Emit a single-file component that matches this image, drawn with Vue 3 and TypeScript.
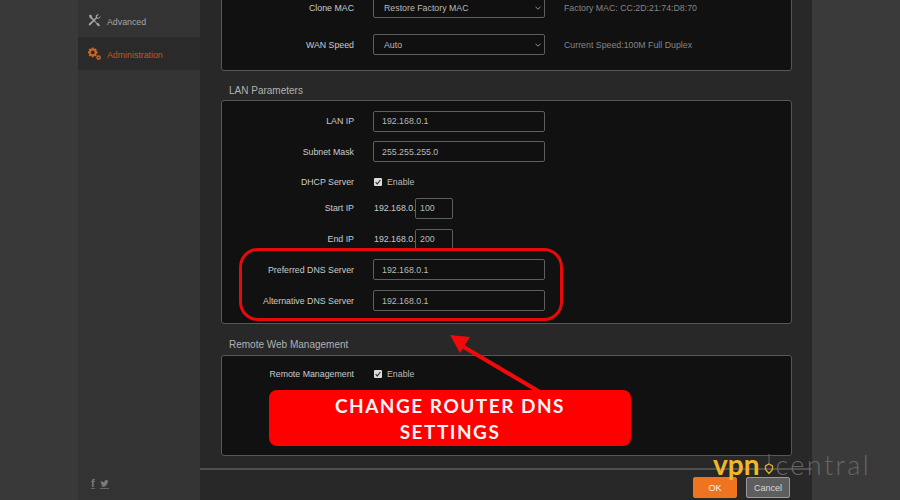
<script setup lang="ts">
const dnsRows = [
  { label: 'Preferred DNS Server', value: '192.168.0.1' },
  { label: 'Alternative DNS Server', value: '192.168.0.1' }
]
</script>

<template>
  <div class="page">
    <aside class="sidebar">
      <nav class="nav">
        <a class="nav-item">
          <svg class="nav-icon" viewBox="0 0 14 14" fill="currentColor">
            <path d="M1 1.5 3 .5l1.2 1.6v1L9.800 9.600l1.200.2 2 2.400-1.300 1.300-2.400-2-.3-1.200L3.300 4.800h-1z" />
            <path d="M13.400 2.200 11.300 4.200l-1.300-.4-.4-1.300L11.700.5C10 0 8.300 1 8.300 2.900c0 .4.100.7.200 1L1 10.600c-.8.800.6 2.300 1.400 1.500l6.900-7.300c1.900.9 4.500-.5 4.100-2.600z" />
          </svg>
          <span>Advanced</span>
        </a>
        <a class="nav-item active">
          <svg class="nav-icon" viewBox="0 0 14 14" fill="currentColor">
            <path fill-rule="evenodd" d="M4.200.5h1.800l.2 1.200 1 .4 1-.7 1.300 1.300-.7 1 .4 1 1.200.2v1.800l-1.200.2-.4 1 .7 1-1.300 1.300-1-.7-1 .4-.2 1.200H4.200L4 9.900l-1-.4-1 .7L.7 8.900l.7-1-.4-1L-.2 6.700V4.900L1 4.700l.4-1-.7-1L2 1.400l1 .7 1-.4zM5.100 3.700a2.100 2.100 0 1 0 0 4.200 2.100 2.100 0 0 0 0-4.200z" />
            <circle cx="11.400" cy="11.400" r="2.500" />
            <circle cx="11.400" cy="11.400" r=".9" fill="#2a2a2a" />
          </svg>
          <span>Administration</span>
        </a>
      </nav>
      <div class="social">
        <span class="fb">f</span>
        <svg class="tw" viewBox="0 0 24 24" fill="currentColor">
          <path d="M23 5c-.8.400-1.700.6-2.600.7.900-.6 1.600-1.400 2-2.500-.9.500-1.800.9-2.900 1.100a4.500 4.500 0 0 0-7.700 4.100C8 8.200 4.700 6.400 2.500 3.700c-1.200 2-.6 4.600 1.400 6-.7 0-1.400-.2-2-.6 0 2.200 1.500 4.100 3.600 4.500-.7.200-1.400.2-2 .1.600 1.800 2.200 3.100 4.200 3.100A9.100 9.100 0 0 1 1 18.700 12.800 12.800 0 0 0 20.700 7.300c.9-.6 1.700-1.400 2.300-2.300z" />
        </svg>
      </div>
    </aside>

    <main class="main">
      <div class="scroll">
        <section class="panel wan-panel">
          <div class="row">
            <label class="label">Clone MAC</label>
            <div class="field select">
              <span>Restore Factory MAC</span>
              <svg viewBox="0 0 6 4" class="chev"><path d="M.5.8 3 3.200 5.500.8" /></svg>
            </div>
            <span class="note">Factory MAC: CC:2D:21:74:D8:70</span>
          </div>
          <div class="row">
            <label class="label">WAN Speed</label>
            <div class="field select">
              <span>Auto</span>
              <svg viewBox="0 0 6 4" class="chev"><path d="M.5.8 3 3.200 5.500.8" /></svg>
            </div>
            <span class="note">Current Speed:100M Full Duplex</span>
          </div>
        </section>

        <h3 class="section-title lan-title">LAN Parameters</h3>
        <section class="panel lan-panel">
          <div class="row">
            <label class="label">LAN IP</label>
            <div class="field">192.168.0.1</div>
          </div>
          <div class="row">
            <label class="label">Subnet Mask</label>
            <div class="field">255.255.255.0</div>
          </div>
          <div class="row check-row">
            <label class="label">DHCP Server</label>
            <span class="check">
              <svg viewBox="0 0 8 8"><path d="M1.600 4.200 3.300 6l3-4" /></svg>
            </span>
            <span class="enable">Enable</span>
          </div>
          <div class="row">
            <label class="label">Start IP</label>
            <span class="prefix">192.168.0.</span>
            <div class="field short">100</div>
          </div>
          <div class="row">
            <label class="label">End IP</label>
            <span class="prefix">192.168.0.</span>
            <div class="field short">200</div>
          </div>
          <div v-for="dns in dnsRows" :key="dns.label" class="row">
            <label class="label">{{ dns.label }}</label>
            <div class="field">{{ dns.value }}</div>
          </div>
        </section>

        <h3 class="section-title remote-title">Remote Web Management</h3>
        <section class="panel remote-panel">
          <div class="row check-row">
            <label class="label">Remote Management</label>
            <span class="check">
              <svg viewBox="0 0 8 8"><path d="M1.600 4.200 3.300 6l3-4" /></svg>
            </span>
            <span class="enable">Enable</span>
          </div>
        </section>
      </div>

      <footer class="footer">
        <button class="btn ok">OK</button>
        <button class="btn cancel">Cancel</button>
      </footer>
    </main>

    <div class="gutter"></div>

    <!-- annotations drawn over the screenshot -->
    <div class="highlight"></div>
    <svg class="arrow" viewBox="0 0 110 65" fill="#f00a0a">
      <path d="M7 8 95 60" stroke="#f00a0a" stroke-width="4" />
      <path d="M0 0 20 2 10 18z" />
    </svg>
    <div class="banner">CHANGE ROUTER DNS<br />SETTINGS</div>

    <div class="watermark">
      <span class="wm-vpn">vpn</span>
      <svg class="wm-pin" viewBox="0 0 10 24" fill="none">
        <path d="M5 0v10" stroke="#666" stroke-width="1" />
        <path d="M5 10 8.500 12v3.500L5 19.500 1.500 15.500V12z" stroke="#e2ad2c" stroke-width="1.300" />
      </svg>
      <span class="wm-central">central</span>
    </div>
  </div>
</template>

<style>
html,
body {
  margin: 0;
  background: #3a3a3a;
}
</style>

<style scoped>
.page {
  position: relative;
  width: 900px;
  height: 500px;
  overflow: hidden;
  display: flex;
  padding-left: 78px;
  box-sizing: border-box;
  background: #393939;
  font-family: "Liberation Sans", Arial, sans-serif;
  font-size: 8.800px;
  color: #c8c8c8;
}

/* Sidebar */
.sidebar {
  width: 122px;
  flex-shrink: 0;
  background: #333333;
  display: flex;
  flex-direction: column;
  justify-content: space-between;
}

.nav-item {
  height: 32.500px;
  box-sizing: border-box;
  display: flex;
  align-items: center;
  gap: 6px;
  padding-left: 10px;
  color: #a6a6a6;
}

.nav-item:first-child {
  height: 37px;
  padding-top: 6px;
}

.nav-item.active {
  padding-top: 3px;
  background: #2a2a2a;
  color: #c4561a;
}

.nav-icon {
  width: 13px;
  height: 13px;
  margin-top: -3px;
}

.nav-item.active .nav-icon {
  color: #d2641c;
}

.social {
  display: flex;
  align-items: flex-end;
  gap: 5px;
  padding: 0 0 11px 13px;
  color: #7a7a7a;
}

.fb,
.tw {
  border-bottom: 1px solid #666666;
}

.fb {
  font-size: 11px;
  font-weight: 700;
  line-height: 10px;
}

.tw {
  width: 9px;
  height: 9px;
}

/* Main column */
.main {
  width: 612px;
  flex-shrink: 0;
  background: #282828;
  display: flex;
  flex-direction: column;
  justify-content: space-between;
}

.scroll {
  margin-top: -13px;
  padding: 0 20px 0 21px;
}

.panel {
  background: #111111;
  border: 1px solid #575757;
  border-radius: 3px;
  display: flex;
  flex-direction: column;
  box-sizing: border-box;
}

.wan-panel {
  padding: 9px 0 15px;
  gap: 16px;
  height: 83.500px;
}

.lan-panel {
  padding: 9.500px 0 12px;
  gap: 9.750px;
  height: 224px;
}

.remote-panel {
  padding: 8px 0;
  height: 101px;
}

.section-title {
  margin: 0;
  padding-left: 8px;
  font-size: 10px;
  font-weight: 400;
  line-height: 12px;
  color: #b2b2b2;
}

.lan-title {
  padding-top: 14px;
  padding-bottom: 3.500px;
}

.remote-title {
  padding-top: 15px;
  padding-bottom: 4px;
}

.row {
  display: flex;
  align-items: center;
  height: 21px;
}

.check-row {
  height: 16.500px;
  box-sizing: border-box;
  padding-top: 3px;
}

.label {
  width: 132px;
  margin-right: 19px;
  text-align: right;
  flex-shrink: 0;
  color: #cbcbcb;
}

.field {
  width: 172px;
  height: 21px;
  box-sizing: border-box;
  border: 1px solid #5e5e5e;
  border-radius: 2px;
  padding-left: 8px;
  display: flex;
  align-items: center;
  color: #b9b9b9;
  background: #101010;
}

.select {
  justify-content: space-between;
  padding: 0 3px 0 10px;
}

.chev {
  width: 6px;
  height: 4px;
  fill: none;
  stroke: #8c8c8c;
  stroke-width: 1;
}

.note {
  margin-left: 19px;
  color: #858585;
}

.short {
  width: 38px;
  padding-left: 4px;
}

.prefix {
  width: 41px;
  margin-left: 1px;
  color: #c8c8c8;
}

.check {
  width: 8px;
  height: 8px;
  margin-left: 1px;
  background: #dcdcdc;
  border-radius: 1px;
  display: flex;
}

.check svg {
  fill: none;
  stroke: #333;
  stroke-width: 1.200;
}

.enable {
  margin-left: 5px;
  color: #b9b9b9;
}

/* Footer */
.footer {
  height: 32px;
  box-sizing: border-box;
  border-top: 2px solid #4f4f4f;
  display: flex;
  justify-content: flex-end;
  align-items: center;
  gap: 9px;
  padding: 5px 22px 0 0;
}

.btn {
  width: 44px;
  height: 21px;
  padding: 0;
  border-radius: 2px;
  font-family: inherit;
  font-size: 9px;
}

.ok {
  background: #ee7420;
  border: 1px solid #ee7420;
  color: #f4f4f4;
}

.cancel {
  background: #5e5e5e;
  border: 1px solid #9a9a9a;
  color: #d8d8d8;
}

.gutter {
  flex: 1;
  background: #3a3a3a;
}

/* Overlays */
.highlight {
  position: absolute;
  left: 239px;
  top: 248px;
  width: 324px;
  height: 73px;
  box-sizing: border-box;
  border: 3px solid #e60a0a;
  border-radius: 19px;
}

.arrow {
  position: absolute;
  left: 450px;
  top: 335px;
  width: 110px;
  height: 65px;
}

.banner {
  position: absolute;
  left: 269px;
  top: 390px;
  width: 362px;
  height: 56px;
  box-sizing: border-box;
  padding-top: 3px;
  background: #fe0000;
  border-radius: 8px;
  color: #fdf3f3;
  text-align: center;
  font-family: Lato, sans-serif;
  font-size: 19px;
  font-weight: 700;
  letter-spacing: 1.500px;
  line-height: 25.500px;
}

.watermark {
  position: absolute;
  left: 713px;
  top: 450px;
  display: flex;
  align-items: flex-start;
  font-family: Lato, sans-serif;
}

.wm-vpn {
  font-size: 28px;
  font-weight: 700;
  line-height: 28px;
  color: #f2b829;
}

.wm-pin {
  width: 10px;
  height: 24px;
  margin: 4px 0 0 5px;
}

.wm-central {
  font-size: 27px;
  font-weight: 300;
  line-height: 28px;
  color: #666666;
  letter-spacing: 2.400px;
  margin: 1px 0 0 1px;
}
</style>
